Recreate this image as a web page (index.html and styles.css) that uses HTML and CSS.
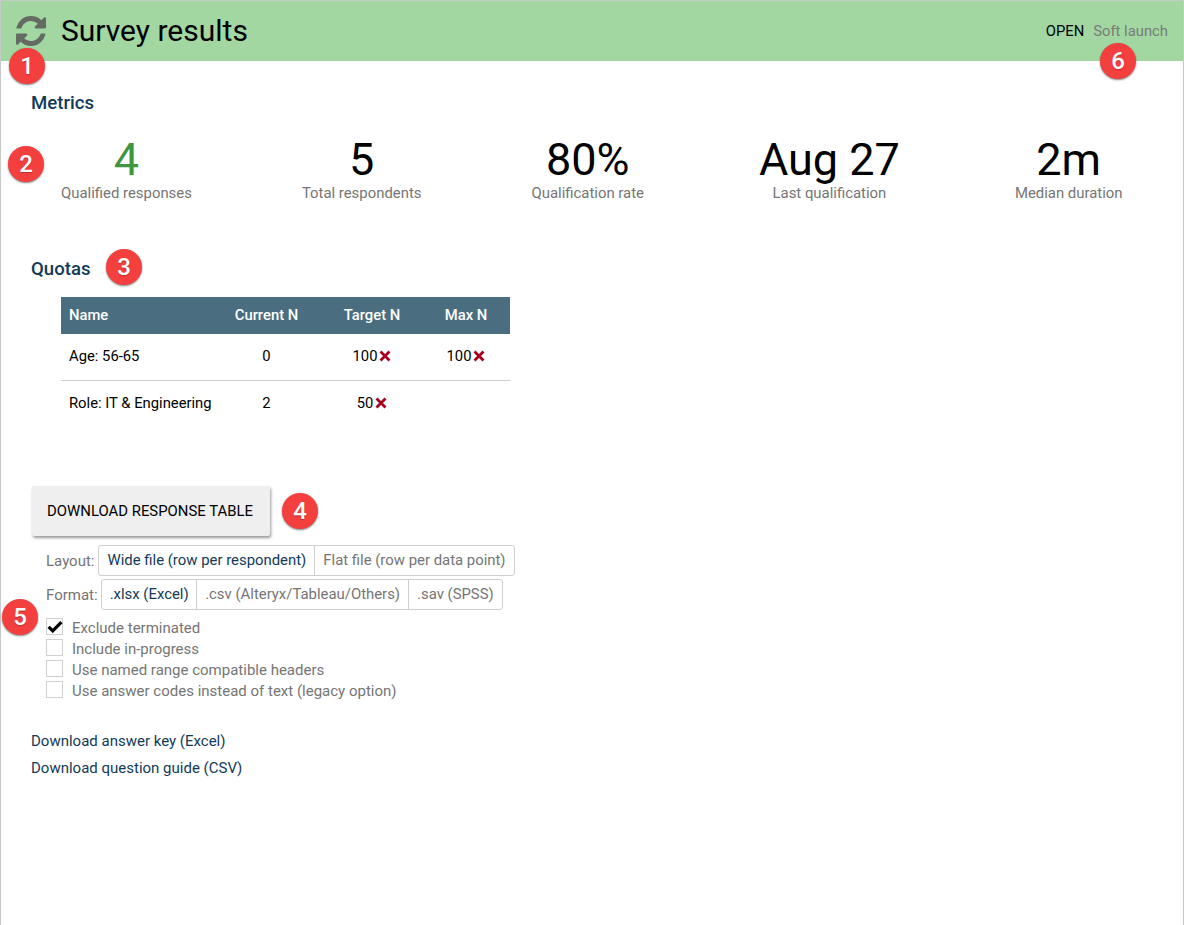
FILE: index.html
```html
<!DOCTYPE html>
<html lang="en">
<head>
<meta charset="utf-8">
<title>Survey results</title>
<link rel="stylesheet" href="styles.css">
</head>
<body>
<div class="page">
  <header class="topbar">
    <div class="title-group">
      <svg class="refresh" viewBox="128 128 1536 1536" aria-hidden="true">
        <path d="M1639 1056q0 5-1 7-64 268-268 434.500t-478 166.500q-146 0-282.500-55t-243.500-157l-129 129q-19 19-45 19t-45-19-19-45v-448q0-26 19-45t45-19h448q26 0 45 19t19 45-19 45l-137 137q71 66 161 102t187 36q134 0 250-65t186-179q11-17 53-117 8-23 30-23h192q13 0 22.500 9.500t9.500 22.500zm25-800v448q0 26-19 45t-45 19h-448q-26 0-45-19t-19-45 19-45l138-138q-148-137-349-137-134 0-250 65t-186 179q-11 17-53 117-8 23-30 23h-199q-13 0-22.500-9.500t-9.500-22.500v-7q65-268 270-434.500t480-166.500q146 0 284 55.500t245 156.500l130-129q19-19 45-19t45 19 19 45z"/>
      </svg>
      <h1>Survey results</h1>
    </div>
    <div class="status"><span class="open">OPEN</span><span class="soft">Soft launch</span></div>
  </header>

  <main class="content">
    <h2 class="section-title metrics-title">Metrics</h2>
    <section class="metrics">
      <div class="metric"><div class="value good">4</div><div class="label">Qualified responses</div></div>
      <div class="metric"><div class="value">5</div><div class="label">Total respondents</div></div>
      <div class="metric"><div class="value">80%</div><div class="label">Qualification rate</div></div>
      <div class="metric spaced"><div class="value">Aug 27</div><div class="label">Last qualification</div></div>
      <div class="metric spaced"><div class="value">2m</div><div class="label">Median duration</div></div>
    </section>

    <h2 class="section-title quotas-title">Quotas</h2>
    <table class="quotas">
      <thead>
        <tr><th class="name">Name</th><th class="current">Current N</th><th class="target">Target N</th><th class="max">Max N</th></tr>
      </thead>
      <tbody>
        <tr>
          <td class="name">Age: 56-65</td><td>0</td>
          <td>100<svg class="x" viewBox="0 0 12 12"><path d="M1.500 1.500l9 9M10.500 1.500l-9 9"/></svg></td>
          <td>100<svg class="x" viewBox="0 0 12 12"><path d="M1.500 1.500l9 9M10.500 1.500l-9 9"/></svg></td>
        </tr>
        <tr>
          <td class="name">Role: IT &amp; Engineering</td><td>2</td>
          <td>50<svg class="x" viewBox="0 0 12 12"><path d="M1.500 1.500l9 9M10.500 1.500l-9 9"/></svg></td>
          <td></td>
        </tr>
      </tbody>
    </table>

    <button class="download" type="button">DOWNLOAD RESPONSE TABLE</button>

    <div class="option-row layout-row">
      <span class="option-label">Layout:</span>
      <div class="segments">
        <span class="segment active">Wide file (row per respondent)</span>
        <span class="segment">Flat file (row per data point)</span>
      </div>
    </div>
    <div class="option-row format-row">
      <span class="option-label">Format:</span>
      <div class="segments">
        <span class="segment active">.xlsx (Excel)</span>
        <span class="segment">.csv (Alteryx/Tableau/Others)</span>
        <span class="segment">.sav (SPSS)</span>
      </div>
    </div>

    <ul class="checks">
      <li><span class="box"><svg class="tick" viewBox="0 0 20 16"><path d="M2 8.500l5.200 5L18 2.500"/></svg></span>Exclude terminated</li>
      <li><span class="box"></span>Include in-progress</li>
      <li><span class="box"></span>Use named range compatible headers</li>
      <li><span class="box"></span>Use answer codes instead of text (legacy option)</li>
    </ul>

    <div class="links">
      <a href="#">Download answer key (Excel)</a>
      <a href="#">Download question guide (CSV)</a>
    </div>
  </main>

  <span class="badge b1">1</span>
  <span class="badge b2">2</span>
  <span class="badge b3">3</span>
  <span class="badge b4">4</span>
  <span class="badge b5">5</span>
  <span class="badge b6">6</span>
</div>
</body>
</html>
```
FILE: styles.css
```css
* { box-sizing: border-box; }
html, body { margin: 0; height: 100%; }
body {
  font-family: Roboto, "Liberation Sans", sans-serif;
  color: #000;
  background: #fff;
  overflow: hidden;
}
.page {
  position: relative;
  height: 925px;
  border: 1px solid #c8c8c8;
  border-bottom: 0;
}
.topbar {
  display: flex;
  justify-content: space-between;
  align-items: center;
  height: 60px;
  background: #a2d7a2;
  padding: 0 15px 0 15px;
}
.title-group { display: flex; align-items: center; gap: 15px; }
.refresh { width: 30px; height: 30px; fill: #636b63; display: block; }
h1 {
  margin: 0;
  font-size: 30px;
  font-weight: 400;
  line-height: 60px;
}
.status { display: flex; gap: 9px; font-size: 14.8px; }
.soft { color: #7b7b7b; }

.content { padding: 0 0 0 30px; }
.section-title {
  margin: 0;
  font-size: 18.6px;
  font-weight: 500;
  color: #123a57;
  line-height: 24px;
}
.metrics-title { padding-top: 30px; }
.metrics {
  display: flex;
  gap: 110px;
  margin: 20px 0 0 30px;
}
.metric { text-align: center; }
.metric.spaced { margin-left: 5px; }
.value { font-size: 45px; line-height: 50px; }
.value.good { color: #3f963f; }
.label { font-size: 14.9px; line-height: 17px; color: #757575; }
.quotas-title { margin-top: 55px; }

.quotas {
  margin: 16px 0 0 30px;
  width: 449px;
  border-collapse: collapse;
  table-layout: fixed;
  font-size: 14.8px;
}
.quotas th {
  background: #4a6d80;
  color: #fff;
  font-weight: 500;
  height: 37px;
  text-align: center;
  padding: 0 0 2px;
}
.quotas td {
  height: 46px;
  text-align: center;
  padding: 0 0 2px;
}
.quotas tbody tr + tr td { border-top: 1px solid #cfcfcf; padding: 0; }
.quotas .name { text-align: left; padding-left: 8px; width: 150px; white-space: nowrap; }
.quotas .current { width: 111px; }
.quotas .target { width: 100px; }
.x {
  width: 12px;
  height: 12px;
  margin-left: 2px;
  vertical-align: -1px;
  fill: none;
  stroke: #a5001e;
  stroke-width: 2.8;
}

.download {
  display: block;
  margin: 60px 0 0 1px;
  width: 238px;
  height: 50px;
  background: #efefef;
  border: 0;
  border-radius: 2px;
  box-shadow: 1px 2px 3px rgba(0, 0, 0, .4);
  font: 400 14.9px Roboto, sans-serif;
  color: #000;
  padding: 0 2px 0 0;
}
.option-row { display: flex; align-items: center; margin-left: 15px; gap: 4px; }
.layout-row { margin-top: 9px; }
.format-row { margin-top: 3px; gap: 3px; }
.option-label { color: #757575; font-size: 15px; }
.segments {
  display: flex;
  height: 31px;
  border: 1px solid #cfcfcf;
  border-radius: 3px;
  background: #fff;
}
.segment {
  padding: 0 8px;
  line-height: 29px;
  font-size: 14.9px;
  color: #757575;
  border-left: 1px solid #cfcfcf;
}
.segment:first-child { border-left: 0; }
.segment.active { color: #123a57; }
.format-row .segment { padding: 0 7.500px 0 8px; }
.format-row .segment:last-child { padding: 0 8.500px; }

.checks {
  list-style: none;
  margin: 7px 0 0 15px;
  padding: 0;
  font-size: 15px;
  color: #757575;
}
.checks li { display: flex; align-items: center; height: 21px; gap: 9px; }
.box {
  position: relative;
  width: 17px;
  height: 17px;
  margin-top: -2px;
  border: 1px solid #d0d0d0;
  background: #fff;
  flex: none;
}
.tick {
  position: absolute;
  left: 0;
  top: 1px;
  width: 16px;
  height: 13px;
  fill: none;
  stroke: #000;
  stroke-width: 4;
}
.links { margin-top: 27px; }
.links a {
  display: block;
  color: #123a57;
  text-decoration: none;
  font-size: 15px;
  line-height: 27px;
}

.badge {
  position: absolute;
  width: 36px;
  height: 36px;
  border-radius: 50%;
  background: #f43f3f;
  color: #fff;
  font-size: 24px;
  font-weight: 500;
  line-height: 36px;
  text-align: center;
  box-shadow: 0 1px 2px rgba(0, 0, 0, .5);
  text-shadow: 0 1px 1px rgba(0, 0, 0, .25);
}
.b1 { left: 8px; top: 47px; }
.b2 { left: 7px; top: 145px; }
.b3 { left: 105px; top: 248px; }
.b4 { left: 281px; top: 492px; }
.b5 { left: 1px; top: 598px; }
.b6 { left: 1099px; top: 42px; }
```
